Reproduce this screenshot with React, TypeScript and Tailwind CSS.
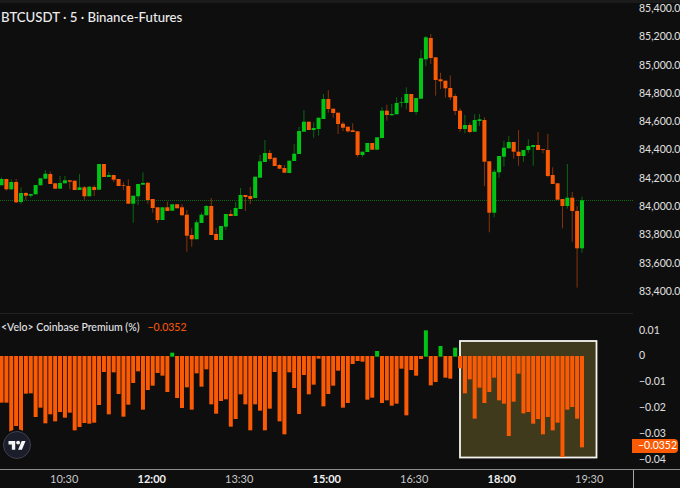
type Candle = [up: 0 | 1, top: number, bottom: number, high?: number, low?: number];

// page pixel coordinates, one entry per 5m bar
const candles: Candle[] = [
  [1, 179, 185.3, 177.5], [0, 179, 189.3, 179, 190.7], [1, 182, 189.3, 179.3, 190], [0, 182, 202.3, 179, 203],
  [1, 193, 202, 187.3, 204], [0, 193, 195.7, 192, 200], [1, 194, 195.7, 194, 197.7], [1, 185, 194.3],
  [1, 178.3, 185.3], [1, 173.7, 178.7, 170], [0, 174, 184, 171.3], [0, 183.3, 188.7, 183, 189],
  [1, 183, 188.7, 176], [1, 180.3, 183.3, 176], [0, 180.3, 181.7, 180.3, 189.3], [0, 180.7, 190],
  [1, 187.3, 190, 174], [0, 187.3, 196.3, 186, 199.7], [1, 186.7, 196.3, 186], [0, 187, 190, 185.3, 196],
  [1, 164, 189.7], [0, 164, 177], [1, 175, 177, 172], [0, 175, 179.7, 175, 182],
  [0, 179, 186], [0, 185, 185.7, 182.3, 190], [0, 186, 203.7, 179.3], [1, 195.7, 203.7, 195.7, 222.7],
  [1, 184, 196.3, 184, 205], [1, 183, 184.7, 172.3], [0, 182.7, 200, 182.7, 203.7], [0, 199, 208, 199, 212.7],
  [0, 207.3, 220, 207.3, 223], [1, 207.3, 220], [0, 207.3, 211, 201.7], [1, 204.3, 210.7],
  [0, 204.3, 208.3], [0, 207.3, 215.3, 204.3], [0, 214.7, 235.7, 210, 251.7], [0, 235, 239.3, 228.3, 246.7],
  [1, 222.3, 239.3, 220], [1, 214.7, 223, 212.7], [1, 206, 215.3, 205], [0, 206, 235, 198],
  [0, 234, 240, 228.3], [1, 226, 240], [1, 214, 226.7, 214, 230], [0, 214, 216, 210],
  [1, 208, 216, 202], [1, 195, 209, 188], [0, 195, 197, 195, 211], [0, 196, 199, 187, 204],
  [1, 176.7, 198], [1, 161.3, 177.7, 155], [1, 153, 162, 140], [0, 153, 159, 150, 160.7],
  [0, 157.7, 166], [0, 165, 168.7, 164], [0, 168, 172.7, 165], [1, 160.7, 173],
  [1, 153.7, 161, 144], [1, 131, 154, 126.7], [1, 121.7, 131.7, 110], [0, 121.7, 130],
  [1, 128, 130, 122.3, 137.7], [1, 117.7, 129, 117.7, 135.7], [1, 99, 119, 94], [0, 99, 109, 90.3, 112.7],
  [0, 108.7, 113, 108.7, 117.7], [0, 112.7, 124, 112.7, 134], [0, 123.7, 127.7, 121.7, 131], [0, 126.7, 131.3, 126.7, 132.7],
  [0, 130.3, 132, 123.3], [0, 131.3, 155, 131.3, 157.3], [1, 151.7, 155, 151.7, 157.3], [1, 143, 152],
  [0, 143, 149.7], [1, 137.3, 149.7], [1, 110.7, 138, 107.3], [0, 110.7, 115, 104.7, 120.7],
  [1, 114, 115.3, 104], [1, 103, 114.3, 97.3], [1, 102, 102.7, 97.3, 107.3], [1, 94, 103, 87.3, 109.3],
  [0, 94, 112], [1, 98, 112, 98, 114.7], [1, 58.3, 98.7, 50], [1, 37.3, 59.3, 36, 66],
  [0, 38, 58, 34, 64], [0, 57.3, 80, 57.3, 95.7], [0, 79.3, 81.3, 72.7, 89], [0, 80.7, 88.3, 80.7, 97.7],
  [0, 88, 97.3, 75.3, 100], [0, 96, 111, 94, 115], [0, 110.7, 129, 108.3, 131.7], [1, 125, 129, 115, 133.3],
  [0, 125, 132, 122.7, 133.3], [1, 120, 131.7, 114.3], [1, 119.3, 121, 114, 126], [0, 120, 161.7, 117.3, 186],
  [0, 161.3, 212.7, 161.3, 232.3], [1, 171.7, 212.7, 169.3, 217.3], [1, 156, 172.3, 156, 177.7], [1, 147.7, 156.7, 140.7, 166.7],
  [1, 142, 148.3, 136], [0, 142, 151.7, 142, 158.7], [0, 151.7, 156, 130, 165.7], [1, 150, 156, 150, 161.7],
  [1, 146, 150, 139.3, 152.7], [1, 145, 147, 145, 165.7], [0, 145, 150, 132], [0, 149, 149.7, 149, 153.3],
  [0, 150, 176, 134, 177.3], [0, 175, 184, 167.3], [0, 183.3, 199.7], [0, 199, 206, 199, 228.3],
  [1, 197.7, 206, 164, 208.7], [0, 197.7, 211, 192, 241.7], [0, 211, 248.3, 206, 287.7], [1, 200.3, 248.3, 196.7, 252.7],
];

// end of each premium bar, page y = 310 + v / 3, zero line at 355
const premium = [
  275, 275, 370, 345, 365, 248, 247, 318, 290, 337, 310, 331, 303, 320, 305, 358, 348, 336, 338, 335,
  282, 183, 310, 184, 249, 317, 281, 216, 181, 296, 237, 224, 186, 194, 243, 125, 261, 291, 229, 296,
  187, 227, 175, 280, 308, 270, 265, 347, 324, 250, 280, 358, 280, 299, 358, 293, 183, 331, 370, 184,
  231, 309, 192, 250, 221, 143, 286, 249, 224, 179, 290, 276, 159, 150, 152, 266, 260, 120, 276, 268,
  284, 278, 173, 313, 177, 194, 144, 58, 223, 213, 105, 200, 203, 110, 172, 247, 205, 323, 230, 276,
  243, 200, 268, 278, 375, 272, 188, 307, 303, 338, 324, 370, 318, 358, 335, 438, 296, 288, 323, 409,
];

const ORANGE = '#fb5a04';
const GREEN = '#02c414';
const barX = (i: number) => 1.5 + 4.878 * i;

const prices = ['85,400.0', '85,200.0', '85,000.0', '84,800.0', '84,600.0', '84,400.0', '84,200.0', '84,000.0', '83,800.0', '83,600.0', '83,400.0'];
const premiumTicks = ['0.01', '0', '−0.01', '−0.02', '−0.03', '−0.04'];
const times = [
  { label: '10:30' },
  { label: '12:00', strong: true },
  { label: '13:30' },
  { label: '15:00', strong: true },
  { label: '16:30' },
  { label: '18:00', strong: true },
  { label: '19:30' },
];

function PriceChart() {
  return (
    <svg viewBox="0 3 633 310" className="block w-[633px] h-[310px]">
      <line x1="0" x2="633" y1="200.5" y2="200.5" stroke="#0a6a12" strokeDasharray="1 1" />
      {candles.map(([up, top, bottom, high, low], i) => {
        const color = up ? GREEN : ORANGE;
        const x = barX(i);
        return (
          <g key={i}>
            <line x1={x} x2={x} y1={high ?? top} y2={low ?? bottom} stroke={color} strokeOpacity="0.5" />
            <rect x={x - 2} y={top} width="4" height={bottom - top} fill={color} />
          </g>
        );
      })}
    </svg>
  );
}

function PremiumChart() {
  const greens = [35, 77, 87, 90, 93];
  return (
    <svg viewBox="0 313 633 156" className="block w-[633px] h-[156px]">
      <rect x="460" y="340" width="136.5" height="116.5" fill="#3f3a1b" stroke="#f4f4f0" strokeWidth="1.8" />
      {premium.map((v, i) => {
        const isGreen = greens.includes(i);
        const end = 310 + v / 3;
        return (
          <rect
            key={i}
            x={barX(i) - 2}
            y={isGreen ? end : 355}
            width="4"
            height={isGreen ? 355.7 - end : end - 355}
            fill={isGreen ? GREEN : ORANGE}
          />
        );
      })}
    </svg>
  );
}

function TvLogo() {
  return (
    <svg viewBox="0 0 32 32" className="absolute left-[0.5px] bottom-[8px] w-8 h-8">
      <circle cx="16" cy="16" r="15.5" fill="#0e0e0f" />
      <circle cx="16" cy="16" r="13.5" fill="#1b1e2a" stroke="#3c404c" />
      <g transform="translate(7.5 10.2) scale(0.48)">
        <path d="M14 22H7V11H0V4h14v18zM28 22h-8l7.5-18h8L28 22z" fill="#f5f5f5" />
        <circle cx="20" cy="7" r="4" fill="#f5f5f5" />
      </g>
    </svg>
  );
}

export default function App() {
  return (
    <div className="w-[680px] h-[488px] flex flex-col overflow-hidden bg-[#0e0e0f] text-[#dcdcdc] font-['Lato',sans-serif]">
      <div className="h-[3px] bg-[#1b1b1c]" />
      <div className="flex h-[465.5px]">
        <div className="w-[633px] flex flex-col">
          <div className="relative h-[310px]">
            <div className="absolute left-[1px] top-[5px] text-[13.2px] leading-[18px] font-medium text-[#ececec]">
              BTCUSDT · 5 · Binance-Futures
            </div>
            <PriceChart />
          </div>
          <div className="relative h-[155.5px] border-t border-[#222223]">
            <div className="absolute left-[1px] top-[5px] flex gap-2 text-[10.5px] leading-4 font-medium text-[#e4e4e4]">
              <span>&lt;Velo&gt; Coinbase Premium (%)</span>
              <span className="text-[#f0560a]">−0.0352</span>
            </div>
            <PremiumChart />
            <TvLogo />
          </div>
        </div>
        <div className="w-px bg-[#a8a8a8]" />
        <div className="relative flex-1 pl-[6px] text-[10.5px] leading-[14px] text-[#e0e0e0]">
          <div className="flex flex-col gap-[14.3px] -mt-[2px] h-[310px]">
            {prices.map(p => (
              <div key={p}>{p}</div>
            ))}
          </div>
          <div className="flex flex-col gap-[11.8px] mt-[11.7px]">
            {premiumTicks.map(t => (
              <div key={t}>{t}</div>
            ))}
          </div>
          <div className="absolute -left-px top-[436px] w-[46px] h-[13.5px] rounded-r-sm bg-[#fb5a04] pl-[6px] leading-[13.5px] text-white">
            −0.0352
          </div>
        </div>
      </div>
      <div className="h-[1.5px] bg-[#8c8c8c]" />
      <div className="flex flex-1">
        <div className="w-[633px] flex items-center pl-[20.5px] text-[11px] text-[#c8c8c8]">
          {times.map(t => (
            <div key={t.label} className={`w-[87.7px] text-center ${t.strong ? 'font-bold text-[#f0f0f0]' : ''}`}>
              {t.label}
            </div>
          ))}
        </div>
        <div className="w-px bg-[#a8a8a8]" />
      </div>
    </div>
  );
}
